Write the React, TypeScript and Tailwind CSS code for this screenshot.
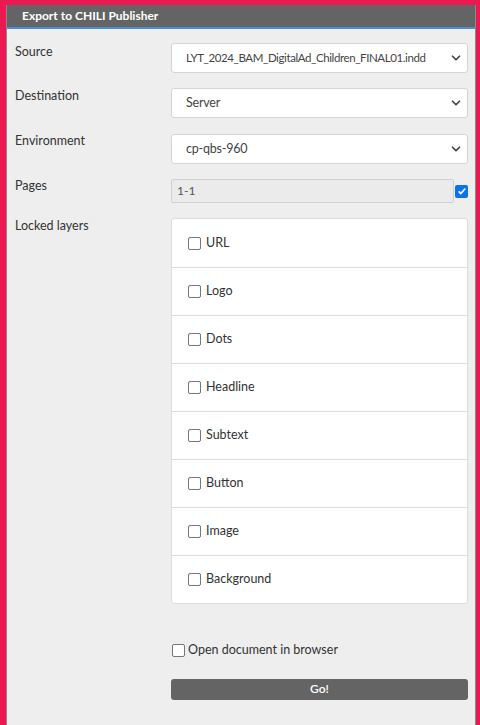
import { ChevronDown } from 'lucide-react'

const layers = ['URL', 'Logo', 'Dots', 'Headline', 'Subtext', 'Button', 'Image', 'Background']

function Select({ value, tight }: { value: string; tight?: boolean }) {
  return (
    <div className="relative h-[30px] rounded-[3px] border border-[#d4d4d4] bg-white flex items-center pl-[14px] pr-7 text-[12.5px] text-[#444]">
      <span className={`whitespace-nowrap ${tight ? 'text-[11.5px] tracking-[-0.4px]' : 'tracking-[-0.2px]'}`}>{value}</span>
      <ChevronDown className="absolute right-[4px] top-[7px] w-[14px] h-[14px] text-[#444]" strokeWidth={3} />
    </div>
  )
}

function Box({ checked }: { checked?: boolean }) {
  if (checked)
    return (
      <span className="w-[13px] h-[13px] rounded-[2px] bg-[#0b73e8] flex items-center justify-center shrink-0">
        <svg viewBox="0 0 12 12" className="w-[10px] h-[10px]"><path d="M2 6.5l2.5 2.5L10 3" fill="none" stroke="white" strokeWidth="2" /></svg>
      </span>
    )
  return <span className="w-[13px] h-[13px] rounded-[2px] border border-[#767676] bg-white shrink-0" />
}

export default function App() {
  return (
    <div className="h-[725px] bg-[#ec1852] pt-[5px] pl-[6px] pr-[4px] font-['Lato','Open_Sans',sans-serif]">
      <div className="h-[720px] bg-[#eeeeee] border-x border-[#8a8a8a] flex flex-col">
        <div className="h-[24px] bg-[#646464] border-b-2 border-[#4a8fd8] pl-[15px] flex items-center text-[12px] font-bold text-white">
          Export to CHILI Publisher
        </div>
        <div className="grid grid-cols-[164px_minmax(0,1fr)] pr-[7px] text-[12.5px] text-[#333]">
          <div className="pl-[8px] pt-[14px]">Source</div>
          <div className="pt-[14px]"><Select value="LYT_2024_BAM_DigitalAd_Children_FINAL01.indd" tight /></div>
          <div className="pl-[8px] pt-[14px]">Destination</div>
          <div className="pt-[15px]"><Select value="Server" /></div>
          <div className="pl-[8px] pt-[14px]">Environment</div>
          <div className="pt-[16px]"><Select value="cp-qbs-960" /></div>
          <div className="pl-[8px] pt-[13px]">Pages</div>
          <div className="pt-[15px] flex items-center gap-[1px]">
            <div className="flex-1 h-[24px] rounded-[2px] border border-[#d0d0d0] bg-[#ebebeb] pl-[5px] flex items-center text-[12px] text-[#555]">1-1</div>
            <Box checked />
          </div>
          <div className="pl-[8px] pt-[14px]">Locked layers</div>
          <div className="pt-[15px]">
            <div className="rounded-[3px] border border-[#dcdcdc] bg-white">
              {layers.map((l, i) => (
                <div key={l} className={`h-[48px] flex items-center gap-[5px] pl-[16px] ${i > 0 ? 'border-t border-[#dcdcdc]' : ''}`}>
                  <Box />
                  <span className="text-[12.5px] text-[#333]">{l}</span>
                </div>
              ))}
            </div>
          </div>
          <div />
          <div className="pt-[37px] flex items-center gap-[3px] pl-[1px]">
            <Box />
            <span>Open document in browser</span>
          </div>
          <div />
          <div className="pt-[19px]">
            <button className="w-full h-[21px] rounded-[3px] bg-[#646464] text-white text-[12px] font-semibold">Go!</button>
          </div>
        </div>
      </div>
    </div>
  )
}
